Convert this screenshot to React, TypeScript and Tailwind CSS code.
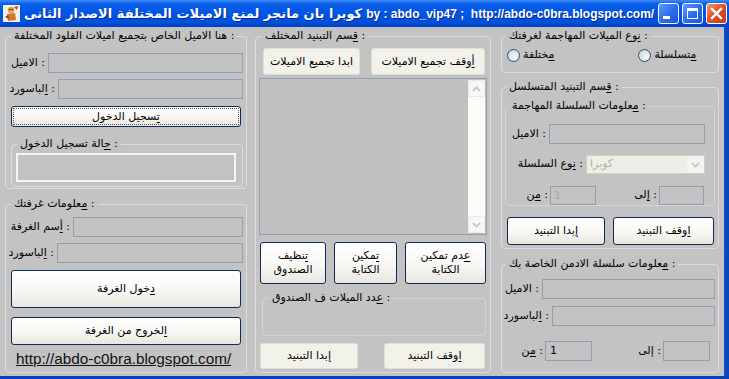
import React from "react";

const Mn = ({ t }: { t: string }) => (
  <>
    <span className="underline underline-offset-2">{t[0]}</span>
    {t.slice(1)}
  </>
);

const Box = ({ className = "", children }: { className?: string; children?: React.ReactNode }) => (
  <div className={`border border-[#8e9fb6] bg-[#c3c3c3] ${className}`}>{children}</div>
);

const Btn = ({
  className = "",
  flat = false,
  children,
}: {
  className?: string;
  flat?: boolean;
  children: React.ReactNode;
}) => (
  <div
    className={`flex items-center justify-center text-center leading-[14px] ${
      flat
        ? "rounded-[3px] border border-[#e2e0d4] bg-[#f3f2ea]"
        : "rounded-[3px] border border-[#0b2b5c] bg-[linear-gradient(to_bottom,#ffffff_0%,#f7f7f4_55%,#e8e6dd_100%)]"
    } ${className}`}
  >
    {children}
  </div>
);

const Radio = ({ label }: { label: string }) => (
  <div className="flex items-center gap-[3px]">
    <span className="h-[13px] w-[13px] rounded-full border border-[#1d5281] bg-[radial-gradient(circle_at_65%_65%,#f8f8f6_0%,#e0e0da_60%,#c9c9c2_100%)]" />
    <span>
      <Mn t={label} />
    </span>
  </div>
);

const CobraIcon = () => (
  <svg width="17" height="17" viewBox="0 0 17 17">
    <rect x="0" y="0" width="17" height="17" fill="#f4f1ea" />
    <circle cx="8" cy="5" r="3.2" fill="#e9a13a" />
    <path d="M4 9 L12 8 L13 15 L5 16 Z" fill="#d9722a" />
    <path d="M2 12 L5 10 L6 14 Z" fill="#7a4a1f" />
    <circle cx="7" cy="4.5" r="0.8" fill="#222" />
    <circle cx="9.5" cy="4.5" r="0.8" fill="#222" />
    <path d="M11 2 L15 1 L14 5 Z" fill="#c0392b" />
  </svg>
);

export default function App() {
  return (
    <div className="relative flex h-[379px] w-[729px] flex-col overflow-hidden bg-[#c3c3c3] font-['DejaVu_Sans',sans-serif] text-[11px] text-black">
      {/* title bar */}
      <div className="flex h-[27px] items-center bg-[linear-gradient(to_bottom,#3d8df9_0%,#0a5ee9_14%,#0055e5_50%,#0050dc_82%,#0041be_100%)] pl-[3px] pr-[2px]">
        <CobraIcon />
        <div className="ml-[4px] flex flex-1 items-center overflow-hidden whitespace-nowrap font-bold text-white [text-shadow:1px_1px_#0a2a88]">
          <span className="font-['DejaVu_Sans',sans-serif] text-[13px]">
            كوبرا بان مانجر لمنع الاميلات المختلفة الاصدار الثانى
          </span>
          <span className="ml-[4px] font-['Liberation_Sans',sans-serif] text-[12px]">
            by : abdo_vip47 ;&nbsp; http://abdo-c0bra.blogspot.com/
          </span>
        </div>
        <div className="flex shrink-0 gap-[3px]">
          <div className="relative h-[21px] w-[21px] rounded-[3px] border border-white bg-[linear-gradient(135deg,#5c9bff_0%,#2d6ff0_50%,#1b55d6_100%)]">
            <div className="absolute bottom-[4px] left-[4px] h-[3px] w-[7px] bg-white" />
          </div>
          <div className="relative h-[21px] w-[21px] rounded-[3px] border border-white bg-[linear-gradient(135deg,#5c9bff_0%,#2d6ff0_50%,#1b55d6_100%)]">
            <div className="absolute left-[4px] top-[4px] h-[11px] w-[11px] border border-t-[3px] border-white" />
          </div>
          <div className="relative flex h-[21px] w-[21px] items-center justify-center rounded-[3px] border border-white bg-[linear-gradient(135deg,#f19a7a_0%,#e0532d_45%,#c93b14_100%)]">
            <svg width="13" height="13" viewBox="0 0 13 13">
              <path d="M2 2 L11 11 M11 2 L2 11" stroke="white" strokeWidth="2.4" strokeLinecap="square" />
            </svg>
          </div>
        </div>
      </div>

      {/* body */}
      <div className="flex flex-1">
        {/* left column */}
        <div className="ml-[5px] flex w-[242px] flex-col">
          <fieldset className="mt-[2px] h-[160px] rounded-[4px] border border-[#dcdcdc]">
            <legend className="ml-[5px] px-[3px] leading-[14px]">هنا الاميل الخاص بتجميع اميلات الفلود المختلفة :</legend>
            <div className="flex flex-col pt-[10px]">
              <div className="flex h-[20px] items-center justify-end gap-[3px] pr-[3px]">
                <span>الاميل :</span>
                <Box className="h-[20px] w-[195px]" />
              </div>
              <div className="mt-[6px] flex h-[20px] items-center justify-end gap-[3px] pr-[3px]">
                <span>
                  <Mn t="الباسورد" /> :
                </span>
                <Box className="h-[20px] w-[185px]" />
              </div>
              <div className="ml-[5px] mt-[7px] w-[230px] rounded-[3px] outline outline-1 outline-offset-[-3px] outline-dotted outline-[#555]">
                <Btn className="h-[21px] w-[230px]">
                  <span>
                    <Mn t="تسجيل الدخول" />
                  </span>
                </Btn>
              </div>
              <fieldset className="ml-[5px] mt-[10px] h-[50px] w-[232px] rounded-[4px] border border-[#dcdcdc]">
                <legend className="ml-[5px] px-[3px] leading-[14px]">
                  <Mn t="حالة تسجيل الدخول" /> :
                </legend>
                <div className="ml-[4px] mt-[2px] h-[29px] w-[220px] border-2 border-[#f4f4f4] bg-[#c3c3c3]" />
              </fieldset>
            </div>
          </fieldset>

          <fieldset className="mt-[8px] h-[176px] rounded-[4px] border border-[#dcdcdc]">
            <legend className="ml-[5px] px-[3px] leading-[14px]">
              <Mn t="معلومات غرفتك" /> :
            </legend>
            <div className="flex flex-col pt-[6px]">
              <div className="flex h-[20px] items-center justify-end gap-[3px] pr-[3px]">
                <span>
                  <Mn t="أسم الغرفة" /> :
                </span>
                <Box className="h-[20px] w-[170px]" />
              </div>
              <div className="mt-[6px] flex h-[20px] items-center justify-end gap-[3px] pr-[3px]">
                <span>
                  <Mn t="الباسورد" /> :
                </span>
                <Box className="h-[20px] w-[186px]" />
              </div>
              <Btn className="ml-[5px] mt-[7px] h-[38px] w-[230px]">
                <span>
                  <Mn t="دخول الغرفة" />
                </span>
              </Btn>
              <Btn className="ml-[5px] mt-[9px] h-[28px] w-[230px]">
                <span>
                  <Mn t="الخروج من الغرفة" />
                </span>
              </Btn>
              <div className="ml-[10px] mt-[5px] font-['Liberation_Sans',sans-serif] text-[15.3px] leading-[18px] text-[#111] underline">
                http://abdo-c0bra.blogspot.com/
              </div>
            </div>
          </fieldset>
        </div>

        {/* middle column */}
        <div className="ml-[8px] flex w-[236px] flex-col">
          <fieldset className="mt-[2px] h-[344px] rounded-[4px] border border-[#dcdcdc]">
            <legend className="ml-[6px] px-[3px] leading-[14px]">
              <Mn t="قسم التبنيد المختلف" /> :
            </legend>
            <div className="flex flex-col">
              <div className="ml-[7px] mt-[5px] flex gap-[11px]">
                <Btn flat className="h-[27px] w-[97px]">
                  ابدا تجميع الاميلات
                </Btn>
                <Btn flat className="h-[27px] w-[114px]">
                  <span>
                    <Mn t="أوقف تجميع الاميلات" />
                  </span>
                </Btn>
              </div>
              <div className="ml-[3px] mt-[3px] flex h-[157px] w-[228px] justify-end border border-[#8e9fb6] bg-[#c1c1c1] p-[1px]">
                <div className="flex w-[17px] flex-col justify-between bg-[#fbfbf8]">
                  <div className="flex h-[17px] items-center justify-center rounded-[2px] border border-[#e6e9ef] bg-[#f7f7f4]">
                    <svg width="9" height="6" viewBox="0 0 9 6">
                      <path d="M1 5 L4.5 1.5 L8 5" stroke="#c2c2bd" strokeWidth="1.6" fill="none" />
                    </svg>
                  </div>
                  <div className="flex h-[17px] items-center justify-center rounded-[2px] border border-[#e6e9ef] bg-[#f7f7f4]">
                    <svg width="9" height="6" viewBox="0 0 9 6">
                      <path d="M1 1 L4.5 4.5 L8 1" stroke="#c2c2bd" strokeWidth="1.6" fill="none" />
                    </svg>
                  </div>
                </div>
              </div>
              <div className="ml-[4px] mt-[7px] flex gap-[8px]">
                <Btn className="h-[42px] w-[66px]">
                  <span>
                    <Mn t="تنظيف" />
                    <br />
                    الصندوق
                  </span>
                </Btn>
                <Btn className="h-[42px] w-[63px]">
                  <span>
                    <Mn t="تمكين" />
                    <br />
                    الكتابة
                  </span>
                </Btn>
                <Btn className="h-[42px] w-[81px]">
                  <span>
                    <Mn t="عدم تمكين" />
                    <br />
                    الكتابة
                  </span>
                </Btn>
              </div>
              <fieldset className="ml-[6px] mt-[7px] h-[45px] w-[224px] rounded-[4px] border border-[#d4d4d4]">
                <legend className="ml-[6px] px-[3px] leading-[14px]">
                  <Mn t="عدد الميلات ف الصندوق" /> :
                </legend>
              </fieldset>
              <div className="ml-[4px] mt-[7px] flex gap-[26px]">
                <Btn flat className="h-[26px] w-[98px]">
                  <span>
                    <Mn t="إبدا التبنيد" />
                  </span>
                </Btn>
                <Btn flat className="h-[26px] w-[101px]">
                  <span>
                    <Mn t="اوقف التبنيد" />
                  </span>
                </Btn>
              </div>
            </div>
          </fieldset>
        </div>

        {/* right column */}
        <div className="ml-[10px] flex w-[218px] flex-col">
          <fieldset className="mt-[2px] h-[44px] rounded-[4px] border border-[#dcdcdc]">
            <legend className="ml-[4px] px-[3px] leading-[14px]">
              <Mn t="نوع الميلات المهاجمة لغرفتك" /> :
            </legend>
            <div className="ml-[5px] mt-[5px] flex h-[14px] items-center gap-[84px]">
              <Radio label="مختلفة" />
              <Radio label="متسلسلة" />
            </div>
          </fieldset>

          <fieldset className="mt-[7px] h-[169px] rounded-[4px] border border-[#dcdcdc]">
            <legend className="ml-[4px] px-[3px] leading-[14px]">
              <Mn t="قسم التبنيد المتسلسل" /> :
            </legend>
            <div className="flex flex-col">
              <fieldset className="ml-[3px] mt-[5px] h-[107px] w-[210px] rounded-[4px] border border-[#d4d4d4]">
                <legend className="ml-[3px] px-[3px] leading-[14px]">
                  <Mn t="معلومات السلسلة المهاجمة" /> :
                </legend>
                <div className="flex flex-col">
                  <div className="mt-[11px] flex h-[20px] items-center justify-end gap-[3px] pr-[9px]">
                    <span>الاميل :</span>
                    <Box className="h-[20px] w-[156px]" />
                  </div>
                  <div className="mt-[11px] flex h-[19px] items-center justify-end gap-[3px] pr-[9px]">
                    <span>
                      <Mn t="نوع السلسلة" /> :
                    </span>
                    <div className="flex h-[19px] w-[119px] items-center justify-between border border-[#d0cfc4] bg-[#efeee6] pl-[3px]">
                      <span className="text-[#b4b2a6]">كوبرا</span>
                      <div className="flex h-[17px] w-[17px] items-center justify-center bg-[#f3f3ef]">
                        <svg width="9" height="6" viewBox="0 0 9 6">
                          <path d="M1 1 L4.5 4.5 L8 1" stroke="#c2c2bd" strokeWidth="1.6" fill="none" />
                        </svg>
                      </div>
                    </div>
                  </div>
                  <div className="mt-[12px] flex h-[19px] items-center">
                    <div className="flex w-[90px] items-center justify-end gap-[2px]">
                      <span>
                        <Mn t="من" /> :
                      </span>
                      <Box className="h-[19px] w-[46px] pl-[3px] leading-[17px] text-[#a8a8a8]">1</Box>
                    </div>
                    <div className="flex w-[108px] items-center justify-end gap-[2px]">
                      <span>
                        <Mn t="إلى" /> :
                      </span>
                      <Box className="h-[19px] w-[45px]" />
                    </div>
                  </div>
                </div>
              </fieldset>
              <div className="ml-[5px] mt-[11px] flex gap-[8px]">
                <Btn className="h-[28px] w-[98px]">
                  <span>
                    <Mn t="إبدا التبنيد" />
                  </span>
                </Btn>
                <Btn className="h-[28px] w-[101px]">
                  <span>
                    <Mn t="اوقف التبنيد" />
                  </span>
                </Btn>
              </div>
            </div>
          </fieldset>

          <fieldset className="mt-[8px] h-[116px] rounded-[4px] border border-[#dcdcdc]">
            <legend className="ml-[4px] px-[3px] leading-[14px]">
              <Mn t="معلومات سلسلة الادمن الخاصة بك" /> :
            </legend>
            <div className="flex flex-col">
              <div className="mt-[8px] flex h-[20px] items-center justify-end gap-[3px] pr-[3px]">
                <span>الاميل :</span>
                <Box className="h-[20px] w-[173px]" />
              </div>
              <div className="mt-[7px] flex h-[20px] items-center justify-end gap-[3px] pr-[3px]">
                <span>
                  <Mn t="الباسورد" /> :
                </span>
                <Box className="h-[20px] w-[163px]" />
              </div>
              <div className="mt-[15px] flex h-[20px] items-center">
                <div className="flex w-[90px] items-center justify-end gap-[2px]">
                  <span>
                    <Mn t="من" /> :
                  </span>
                  <Box className="h-[20px] w-[47px] pl-[4px] leading-[18px]">1</Box>
                </div>
                <div className="flex w-[118px] items-center justify-end gap-[2px]">
                  <span>
                    <Mn t="إلى" /> :
                  </span>
                  <Box className="h-[20px] w-[47px]" />
                </div>
              </div>
            </div>
          </fieldset>
        </div>

        <div className="ml-[5px] w-[5px] bg-[linear-gradient(to_right,#0a4fd0,#0842b8)]" />
      </div>
      <div className="h-[3px] w-full bg-[#0842b8]" />
    </div>
  );
}
